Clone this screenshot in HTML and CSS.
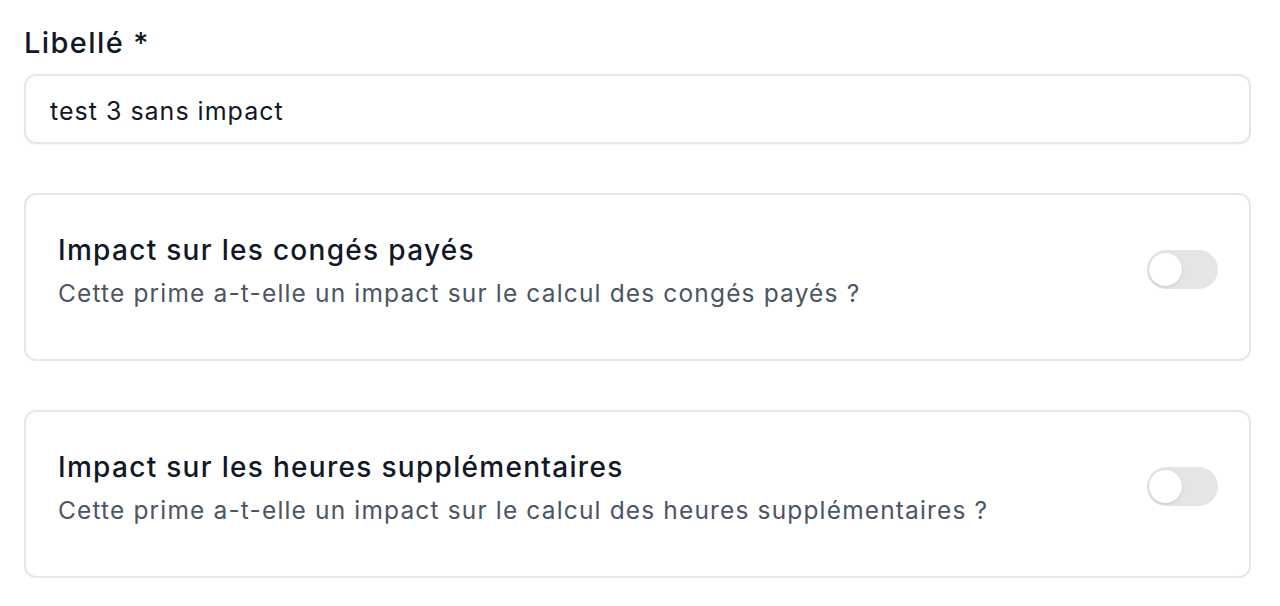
FILE: index.html
```html
<!DOCTYPE html>
<html lang="fr">
<head>
    <meta charset="UTF-8">
    <meta name="viewport" content="width=device-width, initial-scale=1.0">
    <title>Prime</title>
    <link rel="stylesheet" href="styles.css">
</head>
<body>

    <div class="form">
        <div class="field">
            <label for="libelle">Libellé *</label>
            <input type="text" id="libelle" name="libelle" value="test 3 sans impact">
        </div>

        <div class="option-card">
            <div class="option-text">
                <div class="option-title">Impact sur les congés payés</div>
                <div class="option-desc">Cette prime a-t-elle un impact sur le calcul des congés payés ?</div>
            </div>
            <button type="button" class="switch" aria-pressed="false"><span class="knob"></span></button>
        </div>

        <div class="option-card">
            <div class="option-text">
                <div class="option-title">Impact sur les heures supplémentaires</div>
                <div class="option-desc">Cette prime a-t-elle un impact sur le calcul des heures supplémentaires ?</div>
            </div>
            <button type="button" class="switch" aria-pressed="false"><span class="knob"></span></button>
        </div>
    </div>

</body>
</html>
```

FILE: styles.css
```css
body {
    font-family: Inter, "Noto Sans", sans-serif;
    margin: 0;
    background-color: #fff;
    color: #111827;
}
.form {
    display: flex;
    flex-direction: column;
    gap: 49px;
    padding: 23px 29px 0 24px;
}
.field label {
    display: block;
    font-size: 29px;
    font-weight: 450;
    line-height: 40px;
    letter-spacing: 1.4px;
    margin-bottom: 11px;
}
.field input {
    box-sizing: border-box;
    display: block;
    width: 100%;
    height: 70px;
    padding: 4px 24px 0 24px;
    border: 2px solid #e5e7eb;
    border-radius: 12px;
    font-family: inherit;
    font-size: 25px;
    letter-spacing: 1px;
    color: #111827;
    box-shadow: 0 1px 2px rgba(0, 0, 0, 0.04);
}
.option-card {
    box-sizing: border-box;
    height: 168px;
    display: flex;
    align-items: flex-start;
    justify-content: space-between;
    padding: 35px 31px 0 32px;
    border: 2px solid #e5e7eb;
    border-radius: 12px;
}
.option-title {
    font-size: 28px;
    font-weight: 500;
    line-height: 40px;
    letter-spacing: 1.3px;
}
.option-desc {
    margin-top: 5px;
    font-size: 24.5px;
    line-height: 36px;
    letter-spacing: 1.15px;
    color: #4b5563;
}
.switch {
    position: relative;
    flex-shrink: 0;
    width: 71px;
    height: 39px;
    margin-top: 20px;
    padding: 0;
    border: none;
    border-radius: 20px;
    background-color: #e5e5e5;
    cursor: pointer;
}
.knob {
    position: absolute;
    left: 2px;
    top: 3px;
    width: 33px;
    height: 33px;
    border-radius: 50%;
    background-color: #fff;
    box-shadow: 0 1px 3px rgba(0, 0, 0, 0.15);
}
```
